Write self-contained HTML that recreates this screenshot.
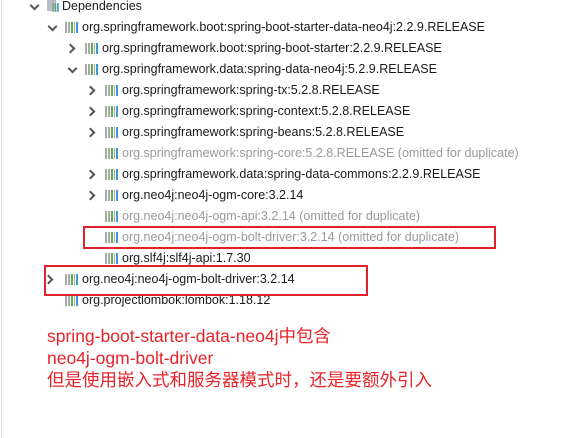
<!DOCTYPE html>
<html><head><meta charset="utf-8"><style>
body{margin:0;width:573px;height:438px;background:#fff;position:relative;overflow:hidden;font-family:"Liberation Sans","Noto Sans CJK SC",sans-serif}
.r{position:absolute;height:20px;line-height:20px;font-size:12.5px;color:#1a1a1a;white-space:nowrap}
.g{color:#9a9a9a}
.a{position:absolute;width:5px;height:5px;border-right:2px solid #555;border-bottom:2px solid #555}
.ar{transform:rotate(-45deg)}
.ad{transform:rotate(45deg)}
.i{position:absolute;width:13px;height:11px}
.i b{position:absolute;bottom:0;width:2px;height:11px}
.box{position:absolute;border:2px solid #e0202a}
.red{position:absolute;left:47px;color:#e8242a;font-size:17.5px;line-height:22px;white-space:nowrap;font-family:"Liberation Sans","Microsoft YaHei","Noto Sans CJK SC",sans-serif}
</style></head><body>
<div style="position:absolute;left:1px;top:0;width:1px;height:438px;background:#ddd"></div>
<div id="c"></div>
<script>
var rows=[
[0,6,30,'d','Dependencies',0,1],
[1,27,48,'d','org.springframework.boot:spring-boot-starter-data-neo4j:2.2.9.RELEASE'],
[2,48,68,'r','org.springframework.boot:spring-boot-starter:2.2.9.RELEASE'],
[2,69,68,'d','org.springframework.data:spring-data-neo4j:5.2.9.RELEASE'],
[3,90,88,'r','org.springframework:spring-tx:5.2.8.RELEASE'],
[3,111,88,'r','org.springframework:spring-context:5.2.8.RELEASE'],
[3,132,88,'r','org.springframework:spring-beans:5.2.8.RELEASE'],
[3,153,88,'','org.springframework:spring-core:5.2.8.RELEASE',1],
[3,174,88,'r','org.springframework.data:spring-data-commons:2.2.9.RELEASE'],
[3,195,88,'r','org.neo4j:neo4j-ogm-core:3.2.14'],
[3,216,88,'','org.neo4j:neo4j-ogm-api:3.2.14',1],
[3,237,88,'','org.neo4j:neo4j-ogm-bolt-driver:3.2.14',1],
[3,258,88,'','org.slf4j:slf4j-api:1.7.30'],
[1,279,46,'r','org.neo4j:neo4j-ogm-bolt-driver:3.2.14'],
[1,300,46,'','org.projectlombok:lombok:1.18.12']
];
var h='';
rows.forEach(function(r){
 var ix=r[2]+17, tx=ix+17, y=r[1];
 if(r[0]==0){ix=47;tx=62;}
 if(r[0]==1){ix=65;tx=82;}
 if(r[3]=='d')h+='<div class="a ad" style="left:'+(r[2]+1)+'px;top:'+(y-4)+'px"></div>';
 if(r[3]=='r')h+='<div class="a ar" style="left:'+(r[2]-1)+'px;top:'+(y-3)+'px"></div>';
 if(r[6]){h+='<div style="position:absolute;left:'+ix+'px;top:'+(y-6)+'px;width:9px;height:11px;background:#b8bcc4"></div><div class="i" style="left:'+(ix+4)+'px;top:'+(y-4)+'px;transform:scale(.8)"><b style="left:0;background:#999"></b><b style="left:3px;background:#6a6"></b><b style="left:6px;background:#3a9ad9"></b></div>';}
 else h+='<div class="i" style="left:'+ix+'px;top:'+(y-5)+'px"><b style="left:0;background:#a8a8a8"></b><b style="left:3px;background:#a8a8a8"></b><b style="left:6px;background:#5cae4a"></b><b style="left:9px;background:#a8a8a8;width:1px"></b><b style="left:11px;background:#3a9ad9"></b></div>';
 var t=r[4]; if(r[5]) t+=' (omitted for duplicate)';
 h+='<div class="r'+(r[5]?' g':'')+'" style="left:'+tx+'px;top:'+(y-10)+'px">'+t+'</div>';
});
document.getElementById('c').innerHTML=h;
</script>
<div class="box" style="left:83px;top:226px;width:409px;height:19px"></div>
<div class="box" style="left:44px;top:265px;width:320px;height:27px"></div>
<div class="red" style="top:325px">spring-boot-starter-data-neo4j中包含</div>
<div class="red" style="top:347px">neo4j-ogm-bolt-driver</div>
<div class="red" style="top:369px">但是使用嵌入式和服务器模式时，还是要额外引入</div>
</body></html>
